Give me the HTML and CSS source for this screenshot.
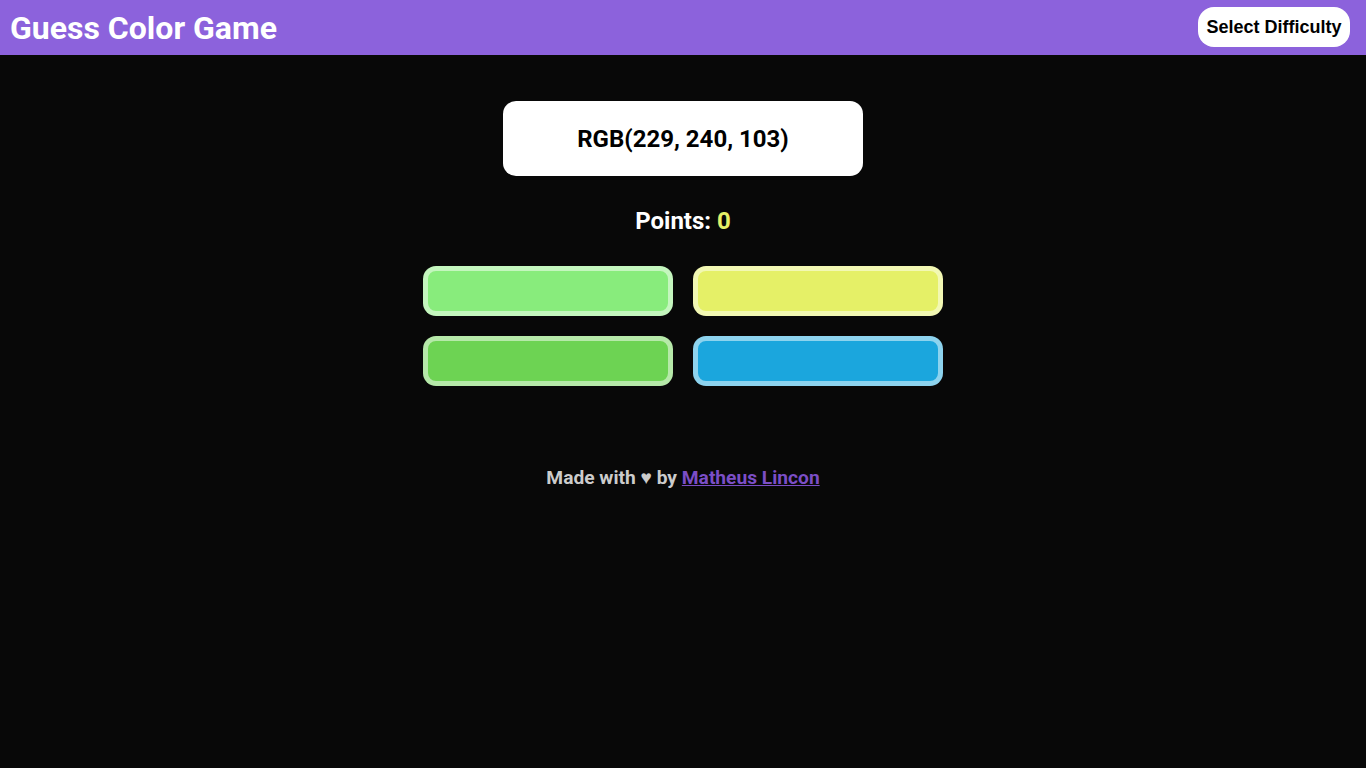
FILE: index.html
```html
<!DOCTYPE html>
<html lang="en">
<head>
<meta charset="utf-8">
<title>Guess Color Game</title>
<link rel="stylesheet" href="styles.css">
</head>
<body>
<header class="topbar">
  <h1 class="title">Guess Color Game</h1>
  <button class="difficulty">Select Difficulty</button>
</header>
<main class="game">
  <div class="rgb-box">RGB(229, 240, 103)</div>
  <p class="points">Points: <span class="points-value">0</span></p>
  <div class="options">
    <button class="option" style="background: rgb(136, 236, 124)"></button>
    <button class="option" style="background: rgb(229, 240, 103)"></button>
    <button class="option" style="background: rgb(109, 211, 83)"></button>
    <button class="option" style="background: rgb(27, 166, 221)"></button>
  </div>
  <footer class="credits">Made with ♥ by <a href="#" class="author">Matheus Lincon</a></footer>
</main>
</body>
</html>
```

FILE: styles.css
```css
* { box-sizing: border-box; }
html, body { margin: 0; padding: 0; }
body {
  background: #080808;
  font-family: Roboto, "Liberation Sans", sans-serif;
  min-height: 768px;
}
.topbar {
  height: 55px;
  background: #8c62dc;
  display: flex;
  align-items: center;
  justify-content: space-between;
  padding: 0 16px 0 10px;
}
.title {
  margin: 0;
  color: #fff;
  font-size: 32px;
  font-weight: 700;
  line-height: 1;
  padding-bottom: 0;
}
.difficulty {
  font-family: "Liberation Sans", Arial, sans-serif;
  font-weight: 700;
  font-size: 18px;
  color: #000;
  background: #fff;
  border: none;
  border-radius: 16px;
  height: 40px;
  width: 152px;
  padding: 0;
  margin-bottom: 1px;
  cursor: pointer;
}
.game {
  display: flex;
  flex-direction: column;
  align-items: center;
  padding-top: 46px;
}
.rgb-box {
  width: 360px;
  height: 75px;
  background: #fff;
  border-radius: 13px;
  display: flex;
  align-items: center;
  justify-content: center;
  font-size: 24px;
  font-weight: 700;
  color: #000;
}
.points {
  margin: 30px 0 0;
  color: #fff;
  font-size: 24px;
  font-weight: 700;
  line-height: 30px;
}
.points-value { color: #e5f067; }
.options {
  margin-top: 30px;
  display: grid;
  grid-template-columns: 250px 250px;
  gap: 20px;
}
.option {
  width: 250px;
  height: 50px;
  border: 5px solid rgba(255, 255, 255, 0.5);
  border-radius: 13px;
  padding: 0;
  cursor: pointer;
}
.credits {
  margin-top: 80px;
  color: #cccccc;
  font-size: 19.2px;
  font-weight: 700;
}
.author { color: #7b4ec6; }
```
